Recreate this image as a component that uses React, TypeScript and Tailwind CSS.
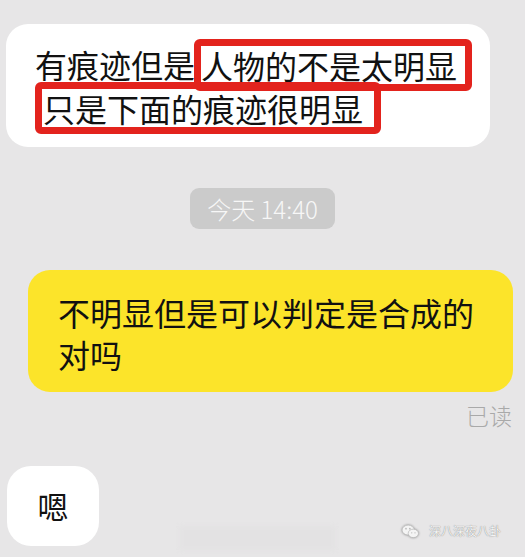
const font = { fontFamily: '"Noto Sans CJK SC", "Noto Sans", sans-serif' };

function WeChatMark() {
  return (
    <svg width="19" height="15" viewBox="0 0 20 16" className="drop-shadow-[0_0_1px_rgba(0,0,0,0.35)]">
      <ellipse cx="7.5" cy="6.5" rx="6.5" ry="5.3" fill="#f4f4f4" stroke="#b8b8b8" strokeWidth="0.8" />
      <ellipse cx="13" cy="10" rx="5.5" ry="4.5" fill="#f4f4f4" stroke="#b8b8b8" strokeWidth="0.8" />
      <circle cx="5.2" cy="5" r="0.9" fill="#b8b8b8" />
      <circle cx="9.3" cy="5" r="0.9" fill="#b8b8b8" />
      <circle cx="11.3" cy="9.4" r="0.7" fill="#b8b8b8" />
      <circle cx="14.8" cy="9.4" r="0.7" fill="#b8b8b8" />
    </svg>
  );
}

export default function App() {
  return (
    <div className="relative w-[525px] h-[557px] overflow-hidden bg-[#e7e6e7] flex flex-col text-[#111]" style={font}>
      {/* incoming message with red highlight boxes */}
      <div className="mt-[24px] ml-[6px] w-[484px] rounded-[22px] bg-white pl-[29px] pt-[19px] pb-[18px] text-[32px]">
        <div className="leading-[43px] h-[43px] whitespace-nowrap">
          有痕迹但是
          <span className="inline-block align-top leading-[38px] -my-[4px] -ml-[1px] border-[7px] border-[#e3231d] rounded-[6px] pr-[8px]">
            人物的不是太明显
          </span>
        </div>
        <div className="leading-[43px] h-[43px] whitespace-nowrap">
          <span className="inline-block align-top leading-[38px] -my-[4px] border-[7px] border-[#e3231d] rounded-[6px] pl-[1px] pr-[11px]">
            只是下面的痕迹很明显
          </span>
        </div>
      </div>

      {/* time stamp */}
      <div className="mt-[41px] self-center w-[145px] h-[41px] rounded-[9px] bg-[#cbcbcb] text-[#f7f7f7] text-[24px] font-light flex items-center justify-center">
        今天 14:40
      </div>

      {/* outgoing message */}
      <div className="mt-[41px] self-end mr-[12px] w-[485px] rounded-[22px] bg-[#fce42a] pl-[30px] pr-[20px] pt-[21px] pb-[17px] text-[32px] leading-[42px]">
        不明显但是可以判定是合成的对吗
      </div>
      <div className="mt-[9px] self-end mr-[13px] text-[23px] leading-[28px] font-light text-[#a9a9a9]">已读</div>

      {/* reply */}
      <div className="mt-[37px] ml-[7px] w-[92px] h-[80px] rounded-[24px] bg-white flex items-center justify-center text-[31px]">
        嗯
      </div>

      {/* blurred strip */}
      <div className="absolute left-[180px] top-[526px] w-[155px] h-[24px] bg-[#e3e2e3] blur-[2px]" />

      {/* watermark */}
      <div className="absolute right-[24px] top-[523px] flex items-center gap-[9px]">
        <WeChatMark />
        <span className="text-[12px] leading-[16px] text-[#f3f3f3] [text-shadow:0_0_1px_rgba(0,0,0,0.55)]">深八深夜八卦</span>
      </div>
    </div>
  );
}
